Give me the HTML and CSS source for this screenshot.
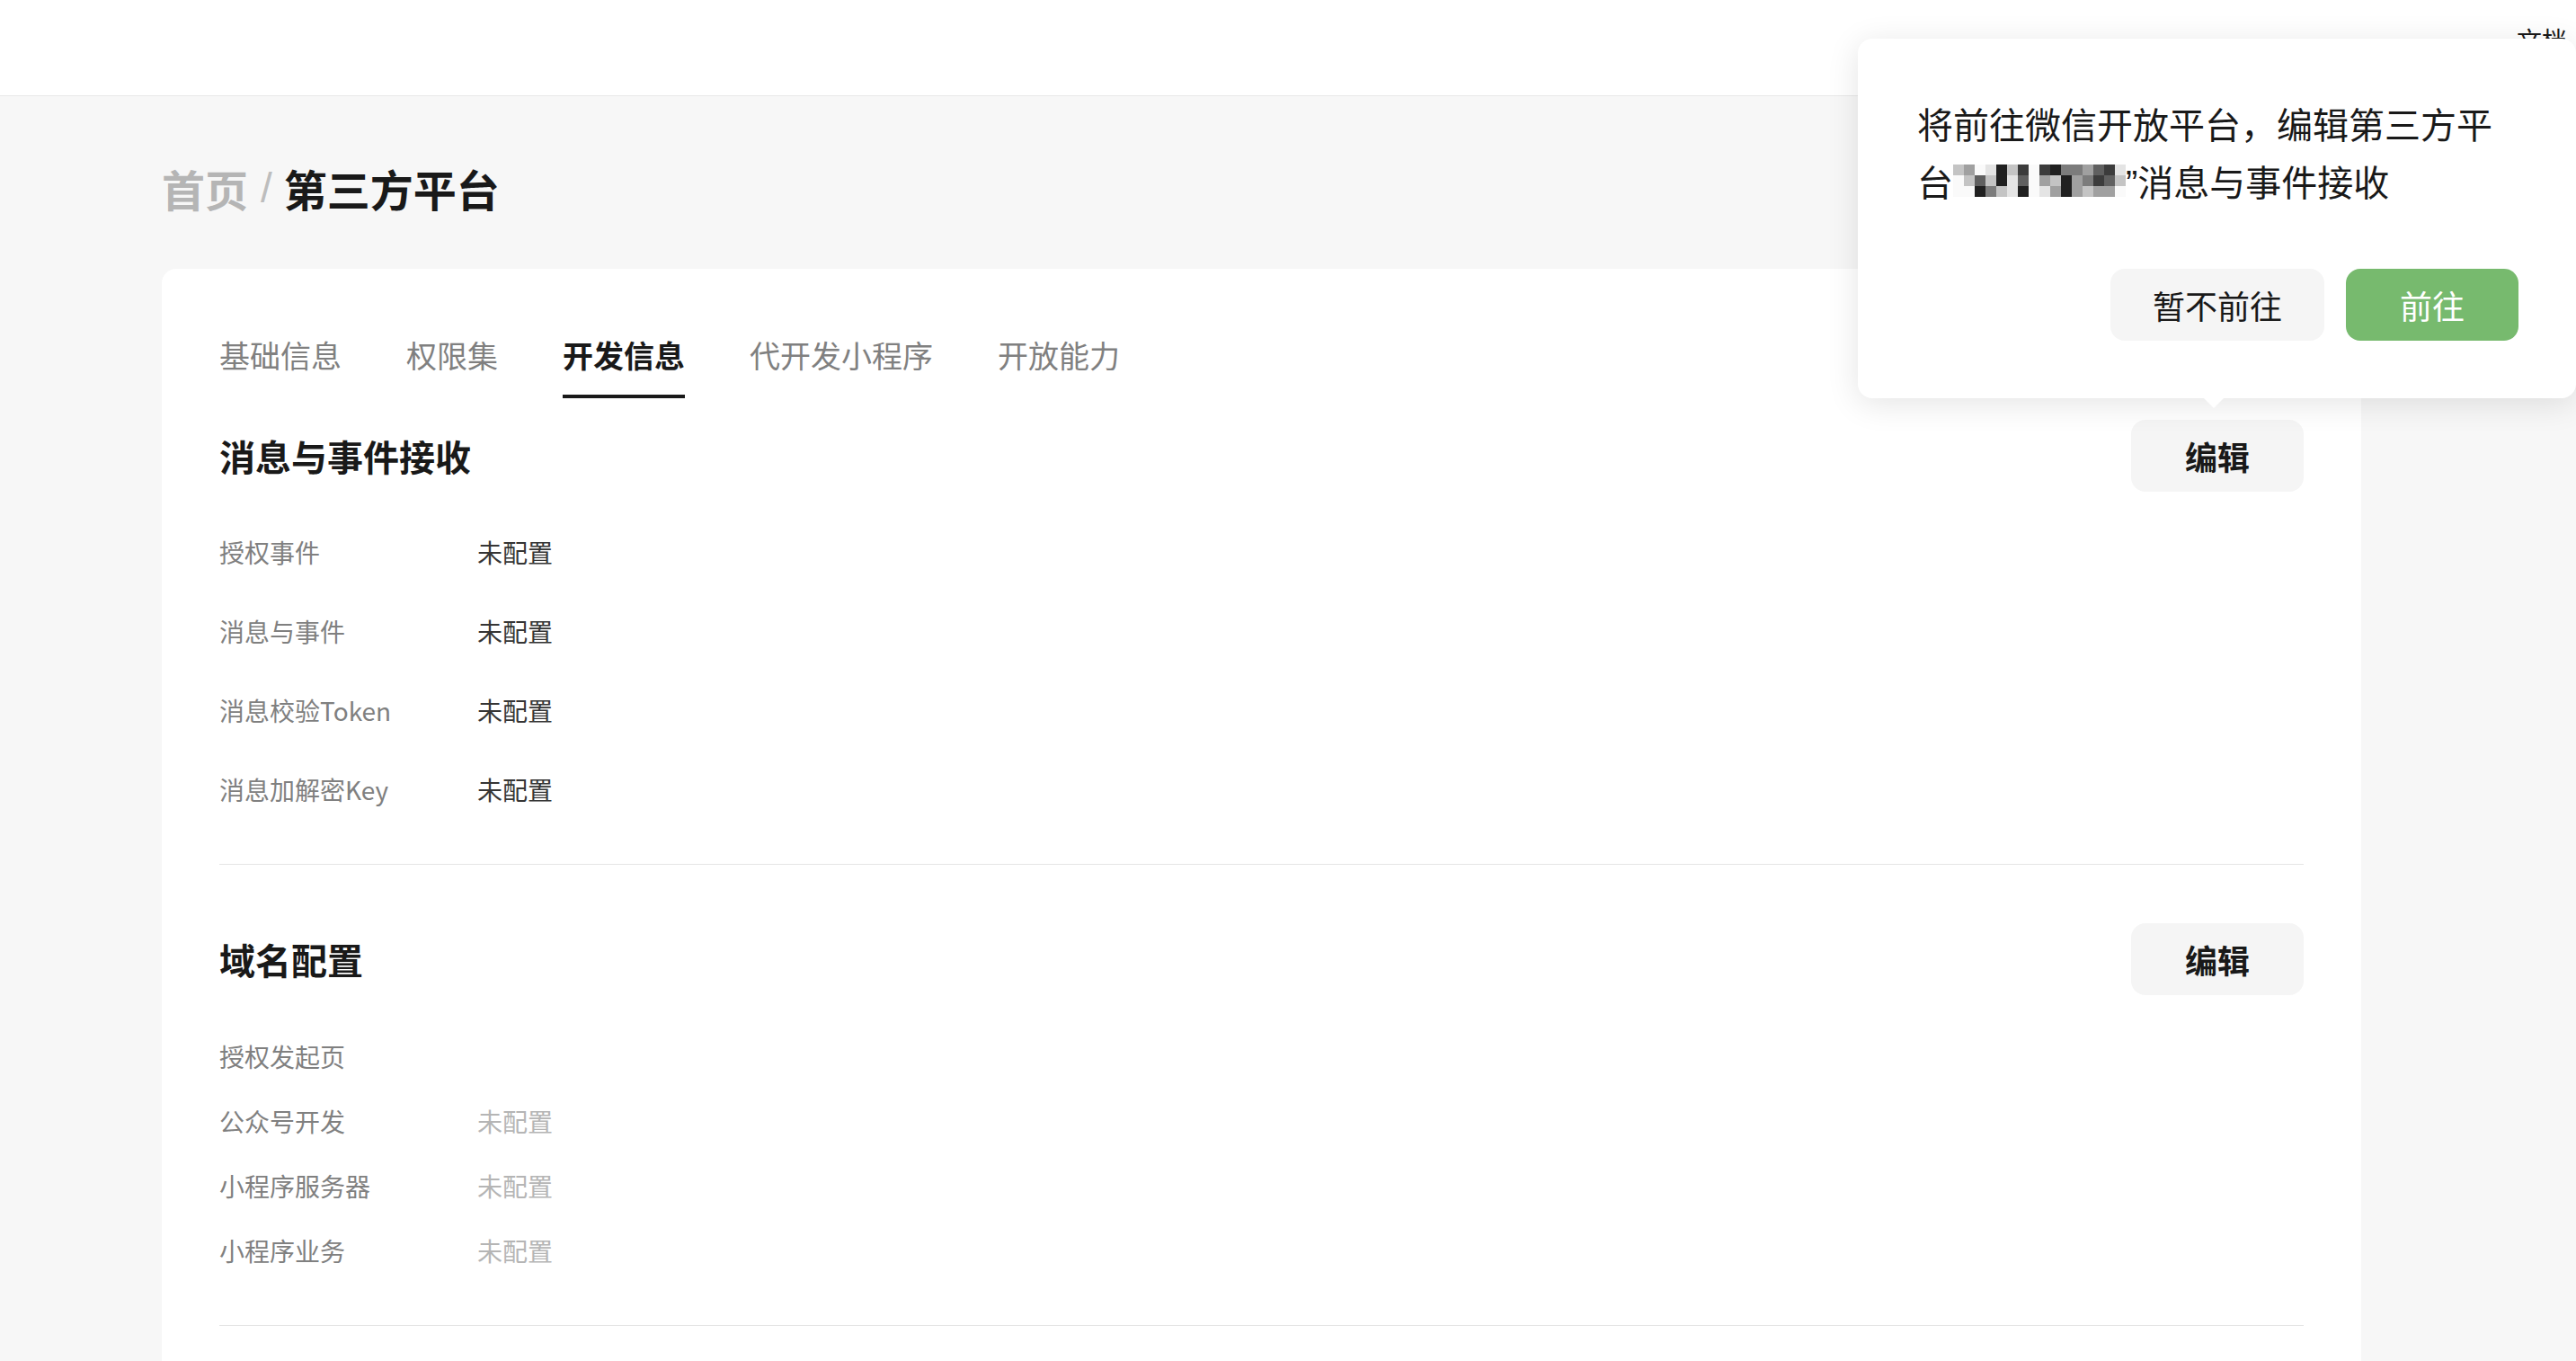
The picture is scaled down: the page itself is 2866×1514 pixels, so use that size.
FILE: index.html
```html
<!DOCTYPE html>
<html lang="zh-CN">
<head>
<meta charset="utf-8">
<title>第三方平台</title>
<link rel="stylesheet" href="styles.css">
</head>
<body>
<header class="topbar">
  <a class="topbar-link">文档</a>
</header>

<main class="main">
  <nav class="crumb">
    <span class="crumb-home">首页</span>
    <span class="crumb-sep">/</span>
    <span class="crumb-current">第三方平台</span>
  </nav>

  <section class="card">
    <div class="tabs">
      <span class="tab">基础信息</span>
      <span class="tab">权限集</span>
      <span class="tab tab-active">开发信息</span>
      <span class="tab">代开发小程序</span>
      <span class="tab">开放能力</span>
    </div>

    <div class="block">
      <div class="block-head">
        <h2 class="block-title">消息与事件接收</h2>
        <button class="btn-edit">编辑</button>
      </div>
      <div class="kv-list">
        <div class="kv"><span class="kv-label">授权事件</span><span class="kv-value">未配置</span></div>
        <div class="kv"><span class="kv-label">消息与事件</span><span class="kv-value">未配置</span></div>
        <div class="kv"><span class="kv-label">消息校验Token</span><span class="kv-value">未配置</span></div>
        <div class="kv"><span class="kv-label">消息加解密Key</span><span class="kv-value">未配置</span></div>
      </div>
      <div class="divider"></div>
    </div>

    <div class="block block-second">
      <div class="block-head">
        <h2 class="block-title">域名配置</h2>
        <button class="btn-edit">编辑</button>
      </div>
      <div class="kv-list kv-list-compact">
        <div class="kv"><span class="kv-label">授权发起页</span><span class="kv-value"></span></div>
        <div class="kv"><span class="kv-label">公众号开发</span><span class="kv-value kv-muted">未配置</span></div>
        <div class="kv"><span class="kv-label">小程序服务器</span><span class="kv-value kv-muted">未配置</span></div>
        <div class="kv"><span class="kv-label">小程序业务</span><span class="kv-value kv-muted">未配置</span></div>
      </div>
      <div class="divider divider-second"></div>
    </div>
  </section>
</main>

<div class="popover">
  <p class="popover-text">将前往微信开放平台，编辑第三方平台<span class="mosaic"><i class="m6"></i><i class="m5"></i><i class="m0"></i><i class="m7"></i><i class="m1"></i><i class="m6"></i><i class="m2"></i><i class="m0"></i><i class="m2"></i><i class="m1"></i><i class="m4"></i><i class="m4"></i><i class="m5"></i><i class="m3"></i><i class="m2"></i><i class="m7"></i><i class="m0"></i><i class="m6"></i><i class="m3"></i><i class="m6"></i><i class="m1"></i><i class="m7"></i><i class="m3"></i><i class="m0"></i><i class="m5"></i><i class="m6"></i><i class="m1"></i><i class="m5"></i><i class="m4"></i><i class="m2"></i><i class="m3"></i><i class="m6"></i><i class="m0"></i><i class="m0"></i><i class="m1"></i><i class="m4"></i><i class="m6"></i><i class="m7"></i><i class="m1"></i><i class="m0"></i><i class="m7"></i><i class="m5"></i><i class="m1"></i><i class="m5"></i><i class="m6"></i><i class="m5"></i><i class="m5"></i><i class="m0"></i></span><span class="quote">”</span>消息与事件接收</p>
  <div class="popover-actions">
    <button class="btn btn-secondary">暂不前往</button>
    <button class="btn btn-primary">前往</button>
  </div>
</div>
</body>
</html>
```

FILE: styles.css
```css
* { box-sizing: border-box; }

html, body {
  margin: 0;
  padding: 0;
}

body {
  background: #f7f7f7;
  font-family: "Noto Sans CJK SC", "Noto Sans", "Liberation Sans", sans-serif;
  color: #191919;
  min-height: 1700px;
  position: relative;
  overflow: hidden;
}

.topbar {
  height: 107px;
  background: #fff;
  border-bottom: 1px solid #e8e8e8;
  display: flex;
  justify-content: flex-end;
  align-items: flex-start;
  padding-right: 10px;
}

.topbar-link {
  font-size: 28px;
  line-height: 40px;
  margin-top: 24px;
  color: #191919;
}

.main {
  padding: 70px 239px 0 180px;
}

.crumb {
  display: flex;
  align-items: center;
  font-size: 48px;
  line-height: 64px;
}

.crumb-home {
  color: #b5b5b5;
  font-weight: 600;
}

.crumb-sep {
  color: #bdbdbd;
  font-family: "Liberation Sans", sans-serif;
  font-weight: 400;
  font-size: 46px;
  margin: 0 13px 0 14px;
}

.crumb-current {
  color: #191919;
  font-weight: 700;
}

.card {
  margin-top: 58px;
  background: #fff;
  border-radius: 16px 16px 0 0;
  padding: 72px 64px 200px;
}

.tabs {
  display: flex;
  gap: 72px;
}

.tab {
  font-size: 34px;
  line-height: 48px;
  padding-bottom: 20px;
  border-bottom: 4px solid transparent;
  color: #808080;
}

.tab-active {
  color: #191919;
  font-weight: 700;
  border-bottom-color: #191919;
}

.block-head {
  display: flex;
  justify-content: space-between;
  align-items: center;
  margin-top: 24px;
}

.block-second .block-head {
  margin-top: 65px;
}

.block-title {
  margin: 0;
  font-size: 40px;
  line-height: 56px;
  font-weight: 700;
  color: #191919;
}

.btn-edit {
  height: 80px;
  padding: 0 60px;
  border: 0;
  border-radius: 16px;
  background: #f5f5f5;
  font-family: inherit;
  font-size: 36px;
  font-weight: 700;
  color: #191919;
}

.kv-list {
  margin-top: 23px;
}

.kv {
  display: flex;
  font-size: 28px;
  line-height: 40px;
  padding: 24px 0;
}

.kv-list-compact {
  margin-top: 32px;
}

.kv-list-compact .kv {
  padding: 16px 0;
}

.kv-label {
  width: 287px;
  flex: none;
  color: #808080;
}

.kv-value {
  color: #353535;
}

.kv-muted {
  color: #b5b5b5;
}

.divider {
  height: 1px;
  background: #e5e5e5;
  margin-top: 39px;
}

.divider-second {
  margin-top: 47px;
}

/* popover */
.popover {
  position: absolute;
  left: 2067px;
  top: 43px;
  width: 799px;
  padding: 62px 64px 64px 66px;
  background: #fff;
  border-radius: 16px;
  box-shadow: 0 6px 36px rgba(0, 0, 0, 0.11);
}

.popover::after {
  content: "";
  position: absolute;
  top: 100%;
  left: 385px;
  width: 0;
  height: 0;
  border-left: 11px solid transparent;
  border-right: 11px solid transparent;
  border-top: 11px solid #fff;
}

.popover-text {
  margin: 0;
  font-size: 40px;
  line-height: 64px;
  color: #191919;
}

.mosaic {
  display: inline-grid;
  grid-template-columns: repeat(16, 12px);
  grid-auto-rows: 12px;
  vertical-align: top;
  margin-top: 14px;
}

.mosaic i { display: block; }
.m0 { background: #fafafa; }
.m1 { background: #202020; }
.m2 { background: #3c3c3c; }
.m3 { background: #606060; }
.m4 { background: #7c7c7c; }
.m5 { background: #a0a0a0; }
.m6 { background: #c4c4c4; }
.m7 { background: #e4e4e4; }

.quote {
  font-family: "Liberation Sans", sans-serif;
  line-height: 0;
}

.popover-actions {
  display: flex;
  justify-content: flex-end;
  gap: 24px;
  margin-top: 66px;
}

.btn {
  height: 80px;
  min-width: 192px;
  padding: 0 47px;
  border: 0;
  border-radius: 16px;
  font-family: inherit;
  font-size: 36px;
}

.btn-secondary {
  background: #f5f5f5;
  color: #191919;
}

.btn-primary {
  background: #77ba6e;
  color: #fff;
}
```
